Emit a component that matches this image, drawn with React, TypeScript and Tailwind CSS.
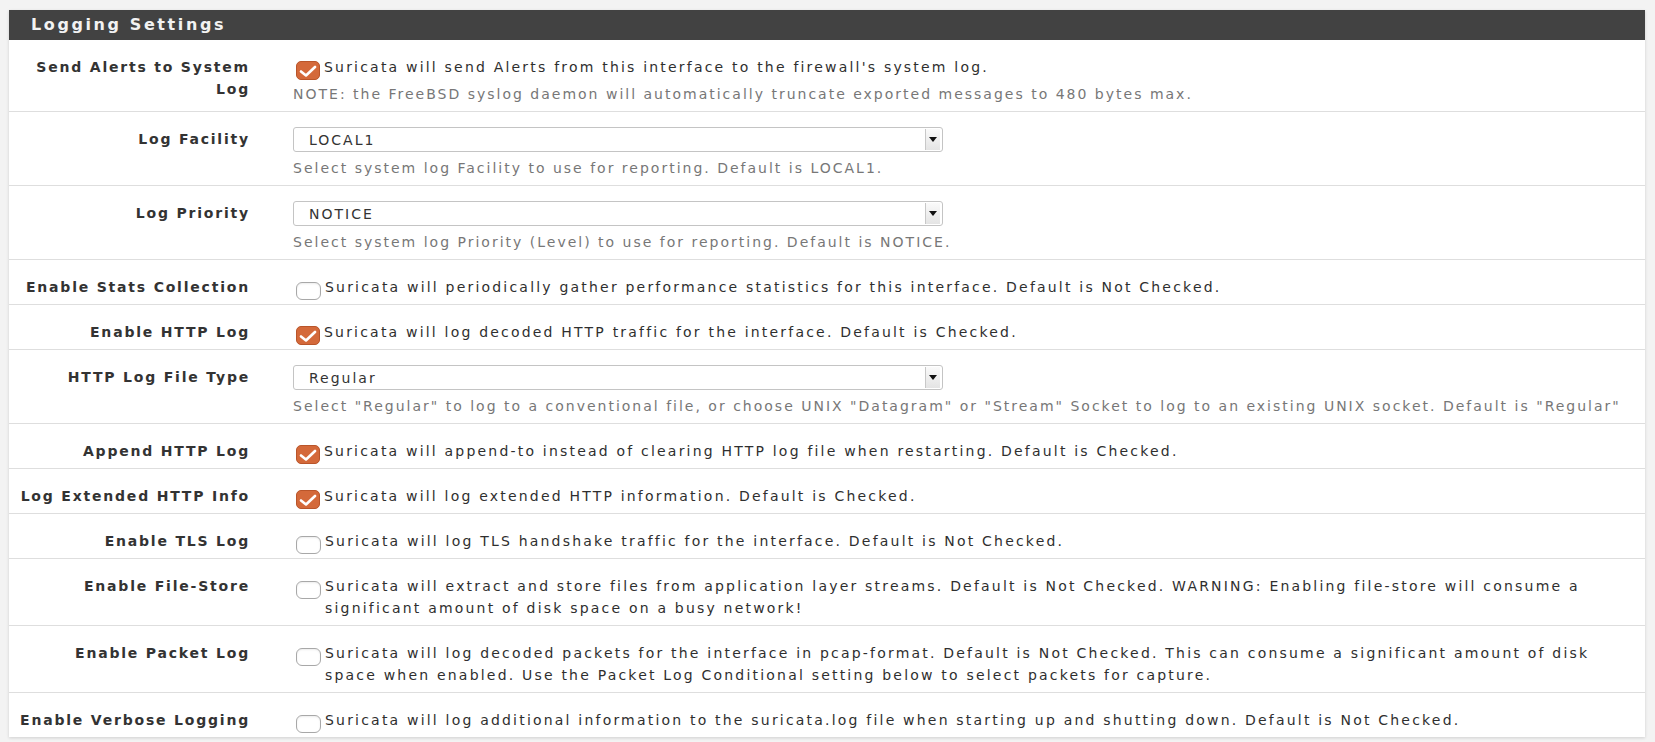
import React from 'react';

type Row = {
  label: string;
  kind: 'check' | 'select';
  checked?: boolean;
  text?: string;
  value?: string;
  help?: string;
};

const rows: Row[] = [
  {
    label: 'Send Alerts to System Log',
    kind: 'check',
    checked: true,
    text: "Suricata will send Alerts from this interface to the firewall's system log.",
    help: 'NOTE: the FreeBSD syslog daemon will automatically truncate exported messages to 480 bytes max.',
  },
  {
    label: 'Log Facility',
    kind: 'select',
    value: 'LOCAL1',
    help: 'Select system log Facility to use for reporting. Default is LOCAL1.',
  },
  {
    label: 'Log Priority',
    kind: 'select',
    value: 'NOTICE',
    help: 'Select system log Priority (Level) to use for reporting. Default is NOTICE.',
  },
  {
    label: 'Enable Stats Collection',
    kind: 'check',
    text: 'Suricata will periodically gather performance statistics for this interface. Default is Not Checked.',
  },
  {
    label: 'Enable HTTP Log',
    kind: 'check',
    checked: true,
    text: 'Suricata will log decoded HTTP traffic for the interface. Default is Checked.',
  },
  {
    label: 'HTTP Log File Type',
    kind: 'select',
    value: 'Regular',
    help: 'Select "Regular" to log to a conventional file, or choose UNIX "Datagram" or "Stream" Socket to log to an existing UNIX socket. Default is "Regular"',
  },
  {
    label: 'Append HTTP Log',
    kind: 'check',
    checked: true,
    text: 'Suricata will append-to instead of clearing HTTP log file when restarting. Default is Checked.',
  },
  {
    label: 'Log Extended HTTP Info',
    kind: 'check',
    checked: true,
    text: 'Suricata will log extended HTTP information. Default is Checked.',
  },
  {
    label: 'Enable TLS Log',
    kind: 'check',
    text: 'Suricata will log TLS handshake traffic for the interface. Default is Not Checked.',
  },
  {
    label: 'Enable File-Store',
    kind: 'check',
    text: 'Suricata will extract and store files from application layer streams. Default is Not Checked. WARNING: Enabling file-store will consume a significant amount of disk space on a busy network!',
  },
  {
    label: 'Enable Packet Log',
    kind: 'check',
    text: 'Suricata will log decoded packets for the interface in pcap-format. Default is Not Checked. This can consume a significant amount of disk space when enabled. Use the Packet Log Conditional setting below to select packets for capture.',
  },
  {
    label: 'Enable Verbose Logging',
    kind: 'check',
    text: 'Suricata will log additional information to the suricata.log file when starting up and shutting down. Default is Not Checked.',
  },
];

// checkbox hangs 2px below the text line, like the native one
const CheckBox = ({ checked }: { checked?: boolean }) =>
  checked ? (
    <span className="-mb-[2px] ml-[3px] mr-[4px] mt-[5px] flex h-[19px] w-[24px] shrink-0 items-center justify-center rounded-[5px] border border-[#b9552a] bg-[#d4693a]">
      <svg width="18" height="12" viewBox="0 0 18 12">
        <path d="M2 6.5 L7 10.5 L16 2" fill="none" stroke="#fff" strokeWidth="2.6" strokeLinecap="round" strokeLinejoin="round" />
      </svg>
    </span>
  ) : (
    <span className="-mb-[2px] ml-[3px] mr-[4px] mt-[6px] block h-[18px] w-[25px] shrink-0 rounded-[6px] border border-[#a8a8a8] bg-white shadow-[inset_0_1px_2px_rgba(0,0,0,0.08)]" />
  );

const Select = ({ value }: { value?: string }) => (
  <div className="-mt-px flex h-[25px] w-[650px] items-center rounded-[3px] border border-[#c4c4c4] bg-white">
    <span className="flex-1 pl-[15px] text-[#333]">{value}</span>
    <span className="mr-[2px] flex h-[21px] w-[15px] items-center justify-center border-l border-[#c8c8c8] bg-gradient-to-b from-[#fafafa] to-[#e4e4e4]">
      <svg width="8" height="5" viewBox="0 0 8 5">
        <path d="M0 0 L8 0 L4 5 Z" fill="#111" />
      </svg>
    </span>
  </div>
);

export default function App() {
  return (
    <div className="min-h-screen bg-[#f3f3f3] pb-[7px] pl-[9px] pr-[10px] pt-[10px] text-[14px] leading-[22px] tracking-[2px] [font-family:'DejaVu_Sans',sans-serif]">
      <div className="bg-white shadow-[0_1px_3px_rgba(0,0,0,0.15)]">
        <div className="flex h-[30px] items-center bg-[#424242] pl-[22px] text-[16px] font-bold tracking-[2.6px] text-[#f2f2f2]">
          Logging Settings
        </div>
        {rows.map((r, i) => (
          <div
            key={r.label}
            className={`flex pb-[6px] pt-[16px] ${i < rows.length - 1 ? 'border-b border-[#dedede]' : ''}`}
          >
            <div className="w-[256px] shrink-0 pr-[15px] text-right text-[14px] font-bold tracking-[1.8px] text-[#333]">
              {r.label === 'Send Alerts to System Log' ? (
                <>
                  Send Alerts to System
                  <br />
                  Log
                </>
              ) : (
                r.label
              )}
            </div>
            <div className="min-w-0 flex-1 pl-[28px] pr-[12px]">
              {r.kind === 'check' ? (
                <div className="flex">
                  <CheckBox checked={r.checked} />
                  <span className="tracking-[2.2px] text-[#2f2f2f]">{r.text}</span>
                </div>
              ) : (
                <Select value={r.value} />
              )}
              {r.help && <div className="mt-[5px] text-[#777]">{r.help}</div>}
            </div>
          </div>
        ))}
      </div>
    </div>
  );
}
